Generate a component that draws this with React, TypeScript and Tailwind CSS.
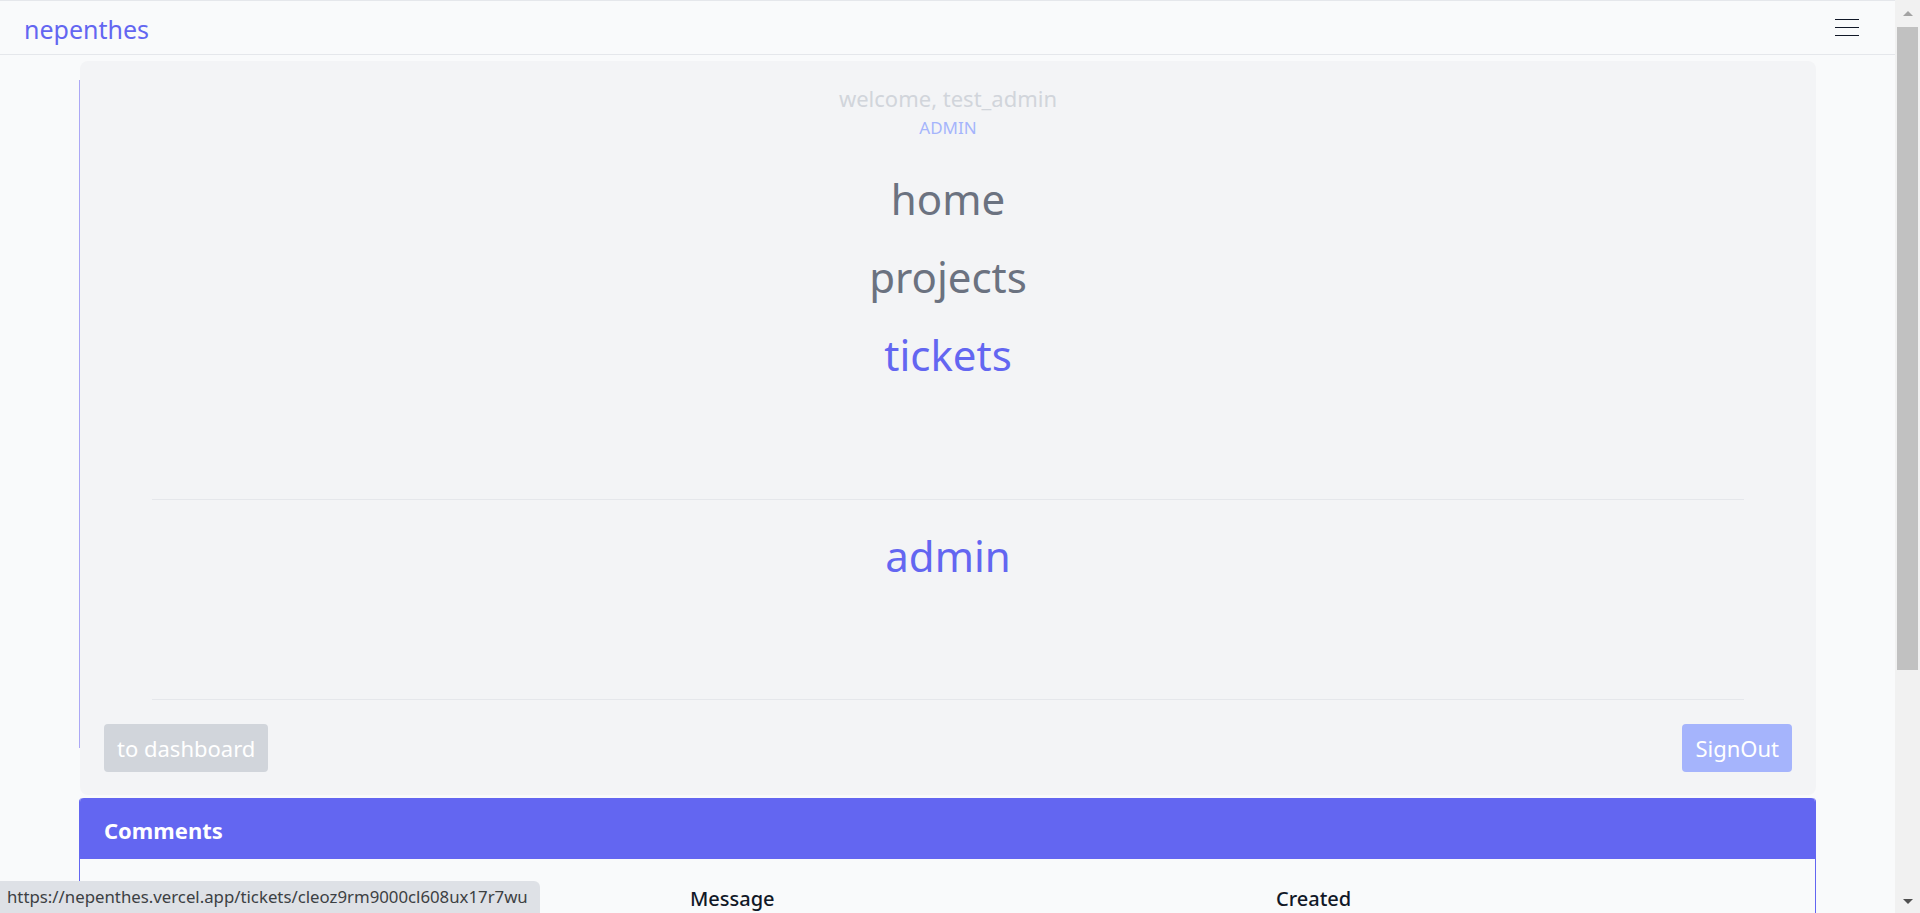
import React from 'react'

const navItems = [
  { label: 'home', active: false },
  { label: 'projects', active: false },
  { label: 'tickets', active: true },
]

function TopBar() {
  return (
    <header className="flex h-[55px] items-center justify-between border-y border-[#e5e7eb] bg-[#f9fafb] pl-6 pr-9">
      <a className="mt-[3px] text-[25px] leading-9 text-[#6366f1]">nepenthes</a>
      <button className="flex w-6 flex-col gap-[7px]" aria-label="menu">
        <span className="h-px w-6 bg-[#111827]" />
        <span className="h-px w-6 bg-[#111827]" />
        <span className="h-px w-6 bg-[#111827]" />
      </button>
    </header>
  )
}

function NavDrawer() {
  return (
    <div className="ml-px rounded-lg bg-[#f3f4f6] pt-[21px] pb-[23px] text-center">
      <p className="text-[22px] leading-8 text-[#d1d5db]">welcome, test_admin</p>
      <p className="text-[17px] leading-[27px] text-[#a5b4fc]">ADMIN</p>

      <nav className="mt-[19px] flex flex-col items-center text-[42px] leading-[78px]">
        {navItems.map((item) => (
          <a key={item.label} className={item.active ? 'text-[#6366f1]' : 'text-[#6b7280]'}>
            {item.label}
          </a>
        ))}
      </nav>

      <hr className="mx-auto mt-[105px] w-11/12 border-[#e5e7eb]" />
      <a className="mt-[17px] block text-[42px] leading-[78px] text-[#6366f1]">admin</a>
      <hr className="mx-auto mt-[104px] w-11/12 border-[#e5e7eb]" />

      <div className="mt-6 flex justify-between px-6">
        <button className="rounded bg-[#d1d5db] px-[13px] py-2 text-[22px] leading-8 text-white">
          to dashboard
        </button>
        <button className="rounded bg-[#a5b4fc] px-[13px] py-2 text-[22px] leading-8 text-white">
          SignOut
        </button>
      </div>
    </div>
  )
}

function CommentsCard() {
  return (
    <section className="mt-[3px] rounded-t-sm border-x border-[#6366f1] bg-[#f9fafb]">
      <h2 className="rounded-t-sm bg-[#6366f1] px-6 pt-[18px] pb-[14px] text-[22px] font-bold leading-[29px] text-white">
        Comments
      </h2>
      <div className="grid grid-cols-[586px_586px_1fr] px-6 pt-[26px] text-[20px] font-medium leading-7 text-[#111827]">
        <span />
        <span>Message</span>
        <span>Created</span>
      </div>
    </section>
  )
}

function Scrollbar() {
  return (
    <div className="flex h-full w-[25px] shrink-0 flex-col bg-[#f1f1f1] px-[2px]">
      <div className="flex h-[27px] items-center justify-center">
        <span className="h-0 w-0 border-x-[5px] border-b-[5px] border-x-transparent border-b-[#a3a3a3]" />
      </div>
      <div className="h-[643px] bg-[#c1c1c1]" />
      <div className="flex-1" />
      <div className="flex h-[27px] items-center justify-center pt-1">
        <span className="h-0 w-0 border-x-[5px] border-t-[5px] border-x-transparent border-t-[#505050]" />
      </div>
    </div>
  )
}

export default function App() {
  return (
    <div className="flex h-[913px] w-full overflow-hidden bg-[#f9fafb] font-['Noto_Sans',sans-serif]">
      <div className="relative min-w-0 flex-1">
        <TopBar />
        <main className="mx-auto mt-[6px] w-[1737px]">
          <div className="relative">
            <span className="absolute left-0 top-[19px] h-[668px] w-px bg-[#aca8f6]" />
            <NavDrawer />
          </div>
          <CommentsCard />
        </main>

        {/* link preview bubble */}
        <div className="absolute bottom-0 left-0 flex h-8 w-[540px] items-center rounded-tr-md bg-[#dee1e6] px-[7px] text-[16.8px] text-[#3c4043]">
          https://nepenthes.vercel.app/tickets/cleoz9rm9000cl608ux17r7wu
        </div>
      </div>
      <Scrollbar />
    </div>
  )
}
